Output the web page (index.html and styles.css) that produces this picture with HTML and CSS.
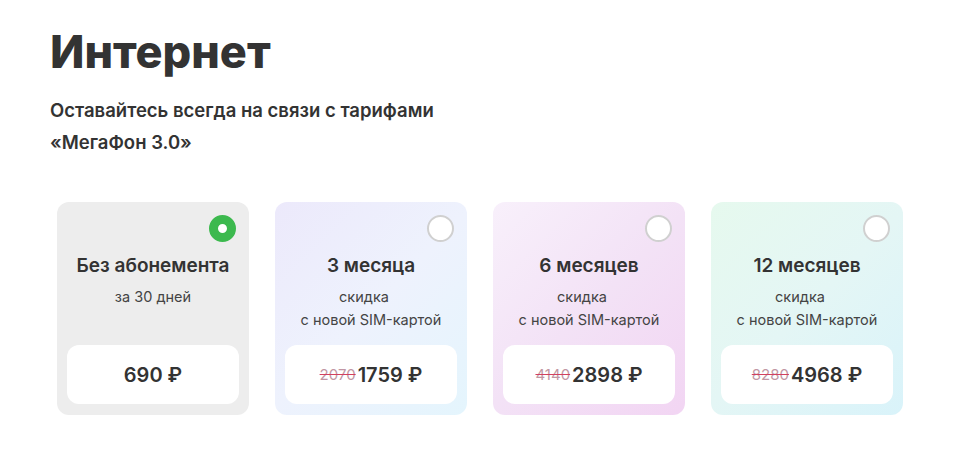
FILE: index.html
```html
<!DOCTYPE html>
<html lang="ru">
<head>
  <meta charset="UTF-8" />
  <meta name="viewport" content="width=device-width, initial-scale=1.0"/>
  <title>Интернет</title>
  <link rel="stylesheet" href="styles.css">
</head>
<body>

  <div class="page">
    <h1>Интернет</h1>
    <p class="lead">Оставайтесь всегда на связи с тарифами<br>«МегаФон 3.0»</p>

    <!-- Tariff periods -->
    <div class="plans">
      <div class="plan plan-none">
        <span class="radio checked"></span>
        <div class="plan-title">Без абонемента</div>
        <div class="plan-note">за 30 дней</div>
        <div class="price-box">
          <span class="price">690 ₽</span>
        </div>
      </div>

      <div class="plan plan-3">
        <span class="radio"></span>
        <div class="plan-title">3 месяца</div>
        <div class="plan-note"><span class="shift">скидка</span><br>с новой SIM-картой</div>
        <div class="price-box">
          <span class="old-price">2070</span>
          <span class="price">1759 ₽</span>
        </div>
      </div>

      <div class="plan plan-6">
        <span class="radio"></span>
        <div class="plan-title">6 месяцев</div>
        <div class="plan-note"><span class="shift">скидка</span><br>с новой SIM-картой</div>
        <div class="price-box">
          <span class="old-price">4140</span>
          <span class="price">2898 ₽</span>
        </div>
      </div>

      <div class="plan plan-12">
        <span class="radio"></span>
        <div class="plan-title">12 месяцев</div>
        <div class="plan-note"><span class="shift">скидка</span><br>с новой SIM-картой</div>
        <div class="price-box">
          <span class="old-price">8280</span>
          <span class="price">4968 ₽</span>
        </div>
      </div>
    </div>
  </div>

</body>
</html>
```

FILE: styles.css
```css
body {
  margin: 0;
  font-family: Inter, 'Noto Sans', sans-serif;
  background-color: #fff;
  color: #333;
}
.page {
  padding: 24px 50px 0;
}
h1 {
  margin: 0;
  font-size: 45px;
  line-height: 56px;
  font-weight: 800;
  color: #333;
}
.lead {
  margin: 14px 0 0;
  font-size: 18.5px;
  line-height: 32px;
  font-weight: 600;
  color: #333;
}
.plans {
  display: flex;
  gap: 26px;
  margin: 44px 0 0 7px;
}
.plan {
  position: relative;
  width: 192px;
  height: 213px;
  box-sizing: border-box;
  padding: 50px 10px 11px;
  border-radius: 12px;
  display: flex;
  flex-direction: column;
  align-items: center;
  text-align: center;
}
.plan-none {
  background-color: #ededed;
}
.plan-3 {
  background: linear-gradient(135deg, #ece9fb 0%, #eef2fd 50%, #e4f5fd 100%);
}
.plan-6 {
  background: linear-gradient(135deg, #f8f0fb 0%, #f3e2f6 50%, #f2d5f3 100%);
}
.plan-12 {
  background: linear-gradient(135deg, #e6f9ee 0%, #e4f6f5 50%, #d9f3fa 100%);
}
.radio {
  position: absolute;
  top: 13px;
  right: 13px;
  width: 27px;
  height: 27px;
  box-sizing: border-box;
  border-radius: 50%;
  background-color: #fff;
  border: 2px solid #d0d0d0;
}
.radio.checked {
  border: 9px solid #3cb94e;
}
.plan-title {
  font-size: 19px;
  line-height: 28px;
  font-weight: 600;
  color: #333;
}
.plan-note {
  margin-top: 5px;
  font-size: 14.5px;
  line-height: 23px;
  color: #444;
}
.shift {
  display: inline-block;
  padding-right: 14px;
}
.price-box {
  margin-top: auto;
  width: 100%;
  height: 59px;
  background-color: #fff;
  border-radius: 12px;
  display: flex;
  align-items: center;
  justify-content: center;
  gap: 2px;
}
.price {
  font-size: 20px;
  font-weight: 600;
  color: #333;
}
.old-price {
  font-size: 15px;
  color: #c297a4;
  text-decoration: line-through;
  text-decoration-color: #d2405f;
}
```
